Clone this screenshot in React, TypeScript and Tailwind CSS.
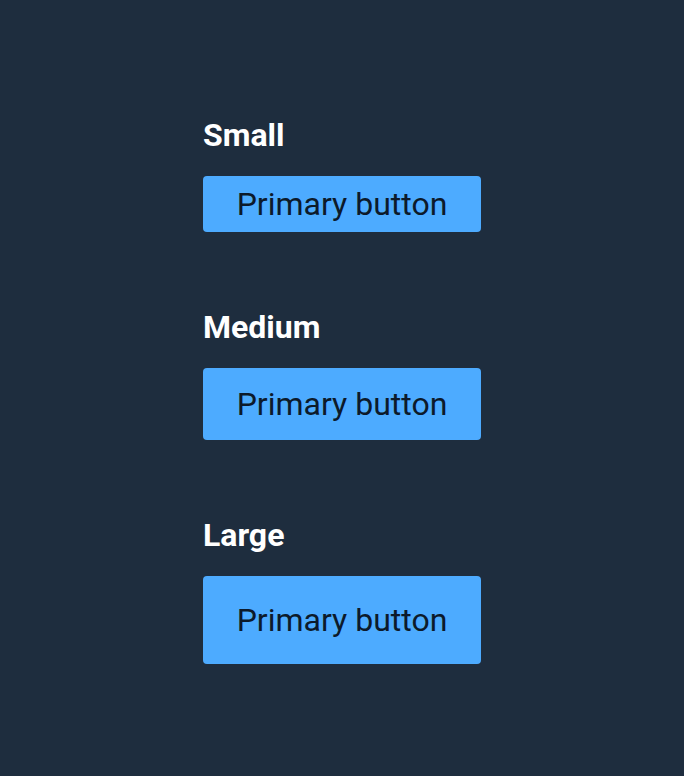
const sizes = [
  { label: "Small", height: "h-[56px]" },
  { label: "Medium", height: "h-[72px]" },
  { label: "Large", height: "h-[88px]" },
];

export default function App() {
  return (
    <div className="min-h-[776px] w-full bg-[#1e2d3e] pt-[117px] font-['Roboto',sans-serif]">
      <div className="ml-[203px] flex flex-col gap-[77px]">
        {sizes.map((s) => (
          <div key={s.label} className="flex flex-col gap-[23px]">
            <h3 className="text-[32px] font-bold leading-[36px] text-white">{s.label}</h3>
            <button
              className={`${s.height} w-[278px] rounded-[4px] bg-[#4dabff] text-[32px] text-[#0c1a2b]`}
            >
              Primary button
            </button>
          </div>
        ))}
      </div>
    </div>
  );
}
